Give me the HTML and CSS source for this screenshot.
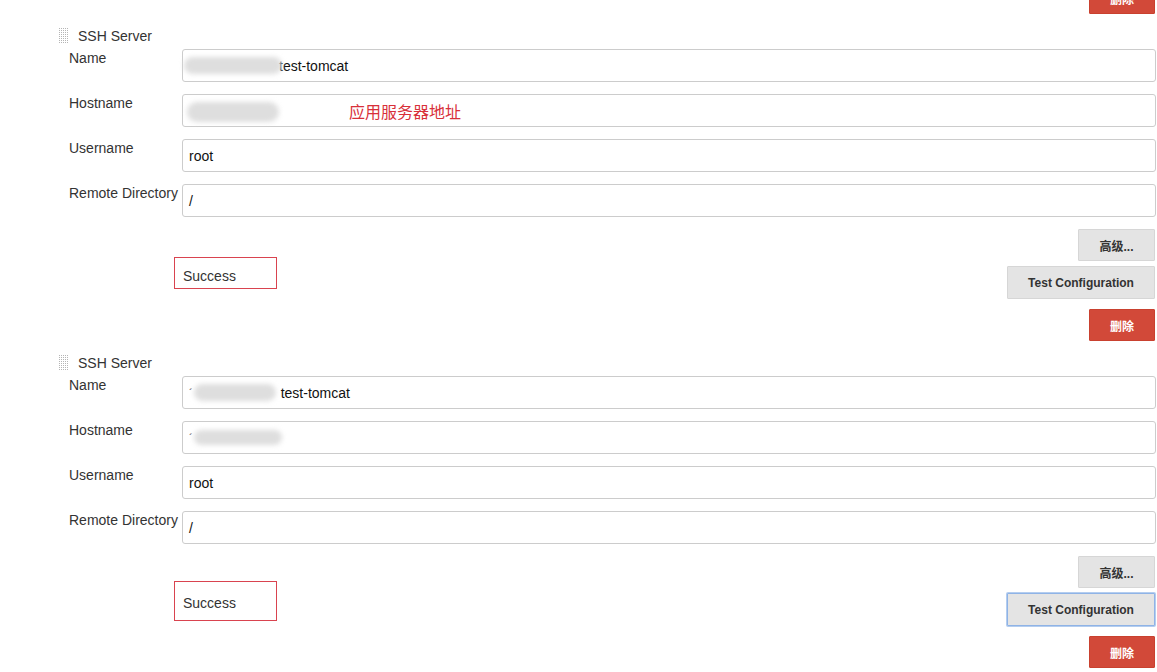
FILE: index.html
```html
<!DOCTYPE html>
<html lang="en">
<head>
    <meta charset="UTF-8">
    <title>SSH Servers</title>
    <link rel="stylesheet" href="styles.css">
</head>
<body>
    <div class="page">
        <!-- tail of the previous server block -->
        <div class="btn-row btn-row-top">
            <button class="btn btn-danger">删除</button>
        </div>

        <div class="chunk">
            <div class="chunk-head">
                <svg class="grip" width="10" height="16" viewBox="0 0 10 16">
                    <defs>
                        <pattern id="dots1" width="2" height="2" patternUnits="userSpaceOnUse">
                            <rect width="1" height="1" fill="#b5b5b5"/>
                        </pattern>
                    </defs>
                    <rect width="10" height="16" fill="url(#dots1)"/>
                </svg>
                <span>SSH Server</span>
            </div>
            <div class="row">
                <label>Name</label>
                <div class="field"><span class="blur blur-name"></span>test-tomcat</div>
            </div>
            <div class="row">
                <label>Hostname</label>
                <div class="field"><span class="blur blur-host"></span><span class="note">应用服务器地址</span></div>
            </div>
            <div class="row">
                <label>Username</label>
                <div class="field">root</div>
            </div>
            <div class="row">
                <label>Remote Directory</label>
                <div class="field">/</div>
            </div>
            <div class="btn-row btn-row-adv">
                <button class="btn btn-adv">高级...</button>
            </div>
            <div class="validate">
                <div class="result">Success</div>
                <button class="btn btn-test">Test Configuration</button>
            </div>
            <div class="btn-row btn-row-del">
                <button class="btn btn-danger">删除</button>
            </div>
        </div>

        <div class="chunk">
            <div class="chunk-head">
                <svg class="grip" width="10" height="16" viewBox="0 0 10 16">
                    <defs>
                        <pattern id="dots2" width="2" height="2" patternUnits="userSpaceOnUse">
                            <rect width="1" height="1" fill="#b5b5b5"/>
                        </pattern>
                    </defs>
                    <rect width="10" height="16" fill="url(#dots2)"/>
                </svg>
                <span>SSH Server</span>
            </div>
            <div class="row">
                <label>Name</label>
                <div class="field"><span class="tick">´</span><span class="blur blur-name2"></span>test-tomcat</div>
            </div>
            <div class="row">
                <label>Hostname</label>
                <div class="field"><span class="tick">´</span><span class="blur blur-host2"></span></div>
            </div>
            <div class="row">
                <label>Username</label>
                <div class="field">root</div>
            </div>
            <div class="row">
                <label>Remote Directory</label>
                <div class="field">/</div>
            </div>
            <div class="btn-row btn-row-adv">
                <button class="btn btn-adv">高级...</button>
            </div>
            <div class="validate">
                <div class="result result-tall">Success</div>
                <button class="btn btn-test btn-focus">Test Configuration</button>
            </div>
            <div class="btn-row btn-row-del">
                <button class="btn btn-danger">删除</button>
            </div>
        </div>
    </div>
</body>
</html>
```

FILE: styles.css
```css
body {
    margin: 0;
    font-family: "Liberation Sans", Arial, "Noto Sans CJK SC", sans-serif;
    font-size: 14px;
    color: #333;
    background: #fff;
    overflow: hidden;
}

.page {
    width: 1156px;
}

.chunk {
    padding-left: 59px;
}

.chunk-head {
    display: flex;
    align-items: center;
    gap: 9px;
    height: 18px;
    margin-top: 13px;
    margin-bottom: 4px;
    line-height: 18px;
}

.grip {
    display: block;
}

.row {
    display: flex;
    padding-left: 10px;
    margin-bottom: 12px;
}

.row:last-of-type {
    margin-bottom: 0;
}

.row label {
    width: 113px;
    flex: none;
    padding-top: 1px;
    line-height: 16px;
}

.field {
    flex: 1;
    height: 33px;
    box-sizing: border-box;
    border: 1px solid #ccc;
    border-radius: 3px;
    padding: 0 6px;
    display: flex;
    align-items: center;
    color: #111;
    white-space: nowrap;
}

/* blurred-out values from the screenshot */
.blur {
    display: inline-block;
    background: #dedede;
    border-radius: 10px;
    filter: blur(2.5px);
}
.blur-name {
    width: 98px;
    height: 17px;
    margin-left: -5px;
    margin-right: -3px;
    position: relative;
}
.blur-host {
    width: 92px;
    height: 20px;
    margin-left: -2px;
    margin-top: 2px;
}
.blur-name2 {
    width: 82px;
    height: 17px;
    margin-right: 5px;
}
.blur-host2 {
    width: 88px;
    height: 15px;
}
.tick {
    font-size: 11px;
    color: #444;
    margin-right: 1px;
}

.note {
    margin-left: 70px;
    font-family: "Noto Sans CJK SC", sans-serif;
    font-size: 16px;
    color: #d8303a;
}

.btn-row {
    display: flex;
    justify-content: flex-end;
    padding-right: 1px;
}
.btn-row-top {
    margin-top: -18px;
}
.btn-row-adv {
    margin-top: 12px;
}
.btn-row-del {
    margin-top: 10px;
}

.btn {
    height: 32px;
    box-sizing: border-box;
    border: 1px solid #d6d6d6;
    background: #e4e4e4;
    color: #333;
    font-family: "Liberation Sans", Arial, "Noto Sans CJK SC", sans-serif;
    font-size: 12px;
    font-weight: 700;
    padding: 0 12px;
    border-radius: 1px;
}

.btn-adv {
    width: 77px;
}

.btn-danger {
    width: 66px;
    background: #d24939;
    border-color: #c9412f;
    color: #fff;
}

.btn-test {
    width: 148px;
    height: 33px;
}

.btn-focus {
    border-color: #8fb3e6;
    box-shadow: 0 0 0 1px #b4cdef;
}

.validate {
    display: flex;
    justify-content: space-between;
    align-items: flex-start;
    margin-top: 5px;
    padding-right: 1px;
}

.result {
    margin-left: 115px;
    margin-top: -9px;
    width: 103px;
    height: 32px;
    box-sizing: border-box;
    border: 1px solid #d9434f;
    padding: 9px 0 0 8px;
    line-height: 18px;
}

.result-tall {
    margin-top: -12px;
    height: 40px;
    padding-top: 12px;
}
```
